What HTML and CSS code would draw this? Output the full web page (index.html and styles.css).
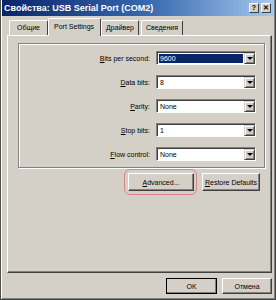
FILE: index.html
```html
<!DOCTYPE html>
<html lang="ru">
<head>
    <meta charset="UTF-8">
    <title>Свойства: USB Serial Port (COM2)</title>
    <link rel="stylesheet" href="styles.css">
</head>
<body>
    <div class="window">
        <div class="titlebar">
            <span class="title">Свойства: USB Serial Port (COM2)</span>
            <div class="tb-buttons">
                <span class="tb-btn">?</span>
                <span class="tb-btn">&#x2715;</span>
            </div>
        </div>

        <div class="tabs">
            <div class="tab">Общие</div>
            <div class="tab active">Port Settings</div>
            <div class="tab">Драйвер</div>
            <div class="tab">Сведения</div>
        </div>

        <div class="panel">
            <div class="group">
                <div class="row">
                    <label><u>B</u>its per second:</label>
                    <div class="combo selected"><span class="value">9600</span><span class="arrow"></span></div>
                </div>
                <div class="row">
                    <label><u>D</u>ata bits:</label>
                    <div class="combo"><span class="value">8</span><span class="arrow"></span></div>
                </div>
                <div class="row">
                    <label><u>P</u>arity:</label>
                    <div class="combo"><span class="value">None</span><span class="arrow"></span></div>
                </div>
                <div class="row">
                    <label><u>S</u>top bits:</label>
                    <div class="combo"><span class="value">1</span><span class="arrow"></span></div>
                </div>
                <div class="row">
                    <label><u>F</u>low control:</label>
                    <div class="combo"><span class="value">None</span><span class="arrow"></span></div>
                </div>
            </div>

            <div class="panel-buttons">
                <button class="btn btn-advanced highlighted"><u>A</u>dvanced...</button>
                <button class="btn btn-restore"><u>R</u>estore Defaults</button>
            </div>
        </div>

        <div class="dialog-buttons">
            <button class="btn btn-default">OK</button>
            <button class="btn">Отмена</button>
        </div>
    </div>
</body>
</html>
```

FILE: styles.css
```css
body {
    margin: 0;
    font-family: "Liberation Sans", Arial, sans-serif;
    font-size: 7px;
    color: #000;
}
.window {
    width: 276px;
    height: 300px;
    box-sizing: border-box;
    background-color: #d4d0c8;
    border-left: 1px solid #505050;
    border-right: 1px solid #404040;
    border-bottom: 1px solid #404040;
    box-shadow: inset 1px 0 #fff, inset -1px -1px #808080;
    display: flex;
    flex-direction: column;
}
.titlebar {
    height: 16px;
    margin: 0 1px;
    padding: 0 3px 0 2px;
    display: flex;
    align-items: center;
    justify-content: space-between;
    background: linear-gradient(to right, #0a246a, #3a6ab0 55%, #a6caf0);
}
.title {
    color: #fff;
    font-weight: bold;
    font-size: 9px;
}
.tb-buttons {
    display: flex;
    gap: 2px;
}
.tb-btn {
    width: 10px;
    height: 10px;
    box-sizing: border-box;
    background-color: #d4d0c8;
    border: 1px solid;
    border-color: #fff #404040 #404040 #fff;
    font-size: 7px;
    font-weight: bold;
    line-height: 8px;
    text-align: center;
}
.tabs {
    display: flex;
    align-items: flex-end;
    height: 17px;
    margin: 2px 0 0 6px;
    position: relative;
    z-index: 1;
}
.tab {
    height: 15px;
    box-sizing: border-box;
    padding: 0 4px;
    margin-right: 2px;
    line-height: 13px;
    border: 1px solid;
    border-bottom: none;
    border-color: #fff #404040 #d4d0c8 #fff;
    border-radius: 2px 2px 0 0;
    background-color: #d4d0c8;
}
.tab:first-child {
    margin-left: 2px;
    padding: 0 7px;
}
.tab.active {
    height: 18px;
    margin: 0 0 -1px -2px;
    padding: 0 6px 0 5px;
    line-height: 15px;
}
.tab.active + .tab {
    margin-left: 0;
}
.panel {
    height: 238px;
    box-sizing: border-box;
    margin: 0 3px 0 6px;
    padding: 7px 6px 0 10px;
    border: 1px solid;
    border-color: #fff #404040 #404040 #fff;
    box-shadow: inset -1px -1px #808080;
}
.group {
    height: 125px;
    box-sizing: border-box;
    padding: 7px 8px 0 0;
    border: 1px solid #808080;
    box-shadow: inset 1px 1px #fff, 1px 1px #fff;
    display: flex;
    flex-direction: column;
    gap: 10px;
}
.row {
    display: flex;
    justify-content: flex-end;
    align-items: center;
    gap: 6px;
}
.combo {
    width: 100px;
    height: 14px;
    box-sizing: border-box;
    display: flex;
    background-color: #fff;
    border: 1px solid;
    border-color: #808080 #fff #fff #808080;
    box-shadow: inset 1px 1px #404040;
}
.combo .value {
    flex: 1;
    padding: 1px 0 0 3px;
    line-height: 11px;
}
.combo.selected .value {
    margin: 2px 1px 1px 2px;
    padding: 0 0 0 1px;
    line-height: 9px;
    background-color: #0a246a;
    color: #fff;
}
.arrow {
    width: 11px;
    margin: 1px 0 0;
    box-sizing: border-box;
    background-color: #d4d0c8;
    border: 1px solid;
    border-color: #d4d0c8 #404040 #404040 #d4d0c8;
    box-shadow: inset 1px 1px #fff, inset -1px -1px #808080;
    display: flex;
    align-items: center;
    justify-content: center;
}
.arrow::before {
    content: "";
    border-left: 3px solid transparent;
    border-right: 3px solid transparent;
    border-top: 3px solid #000;
}
.panel-buttons {
    display: flex;
    justify-content: flex-end;
    gap: 8px;
    margin: 5px 5px 0 0;
}
.btn {
    height: 18px;
    box-sizing: border-box;
    padding: 0;
    font-family: inherit;
    font-size: 7px;
    color: #000;
    background-color: #d4d0c8;
    border: 1px solid;
    border-color: #fff #404040 #404040 #fff;
    box-shadow: inset -1px -1px #808080;
}
.btn-advanced {
    width: 66px;
}
.btn-restore {
    width: 58px;
}
.highlighted {
    position: relative;
}
.highlighted::after {
    content: "";
    position: absolute;
    left: -5px;
    top: -5px;
    right: -4px;
    bottom: -5px;
    border: 1px solid #d98585;
    border-radius: 6px;
}
.dialog-buttons {
    display: flex;
    justify-content: flex-end;
    gap: 5px;
    margin: 5px 3px 0 0;
}
.dialog-buttons .btn {
    width: 50px;
    height: 16px;
}
.dialog-buttons .btn-default {
    width: 51px;
    outline: 1px solid #000;
    outline-offset: -1px;
    border-color: #fff #404040 #404040 #fff;
}
```
